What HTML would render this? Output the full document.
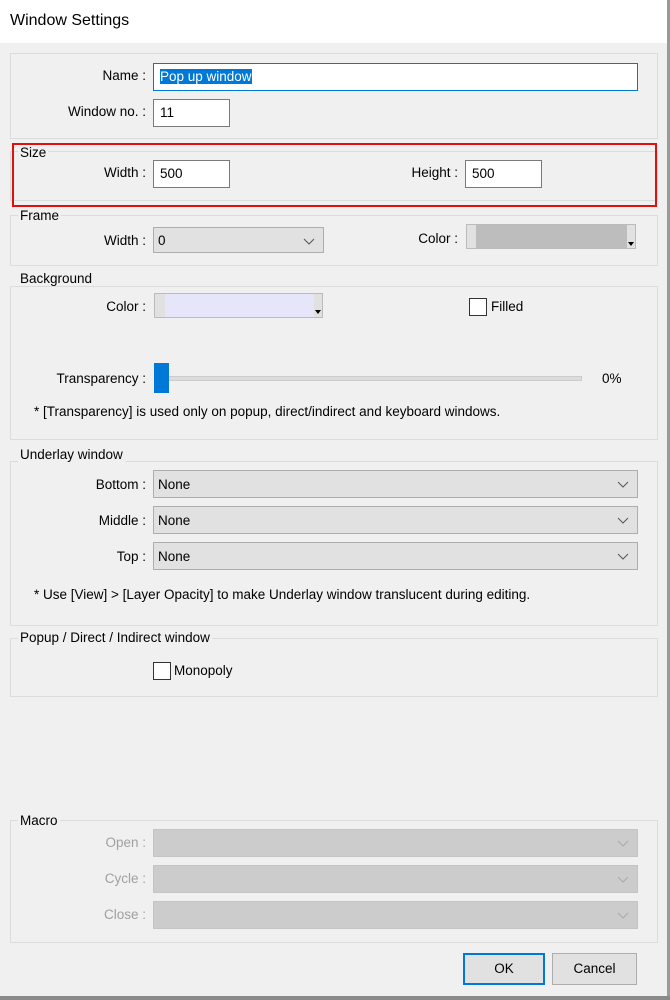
<!DOCTYPE html><html><head><style>
body{margin:0;width:670px;height:1000px;background:#f0f0f0;font-family:"Liberation Sans",sans-serif;font-size:13.5px;color:#000;position:relative;overflow:hidden}
.a{position:absolute}
.t{position:absolute;white-space:nowrap}
.r{text-align:right}
.g{position:absolute;border:1px solid #dcdcdc}
.gl{position:absolute;background:#f0f0f0;padding:0 2px;white-space:nowrap}
.in{position:absolute;background:#fff;border:1px solid #7a7a7a;box-sizing:border-box;padding:5px 6px}
.sel{position:absolute;background:#e1e1e1;border:1px solid #adadad;box-sizing:border-box;padding:6px 4px}
.sel svg{position:absolute;right:8px;top:10px}
.dis{background:#ccc;border-color:#c4c4c4}
.dl{color:#a0a0a0}
.cb{position:absolute;width:16px;height:16px;border:1px solid #333;background:#fff}
.btn{position:absolute;background:#e1e1e1;border:1px solid #adadad;box-sizing:border-box;text-align:center;line-height:29px}
</style></head><body>
<div class="a" style="left:0;top:0;width:667px;height:43px;background:#fff"></div>
<div class="t" style="left:10px;top:12px;font-size:16px">Window Settings</div>
<div class="a" style="left:667px;top:0;width:3px;height:1000px;background:#9a9a9a"></div>
<div class="a" style="left:0;top:996px;width:670px;height:4px;background:#8a8a8a"></div>

<div class="g" style="left:10px;top:53px;width:646px;height:84px"></div>
<div class="t r" style="right:524px;top:68px">Name :</div>
<div class="in" style="left:153px;top:63px;width:485px;height:28px;border-color:#0078d7"><span style="background:#0078d7;color:#fff">Pop up window</span></div>
<div class="t r" style="right:524px;top:104px">Window no. :</div>
<div class="in" style="left:153px;top:99px;width:77px;height:28px">11</div>

<div class="g" style="left:10px;top:151px;width:646px;height:48px"></div>
<div class="gl" style="left:18px;top:145px">Size</div>
<div class="t r" style="right:524px;top:165px">Width :</div>
<div class="in" style="left:153px;top:160px;width:77px;height:28px">500</div>
<div class="t r" style="right:212px;top:165px">Height :</div>
<div class="in" style="left:465px;top:160px;width:77px;height:28px">500</div>
<div class="a" style="left:12px;top:143px;width:641px;height:60px;border:2px solid #e01010"></div>

<div class="g" style="left:10px;top:215px;width:646px;height:49px"></div>
<div class="gl" style="left:18px;top:208px">Frame</div>
<div class="t r" style="right:524px;top:233px">Width :</div>
<div class="sel" style="left:153px;top:227px;width:171px;height:26px;padding:5px 4px">0<svg width="12" height="7"><path d="M1 1l5 5 5-5" fill="none" stroke="#555"/></svg></div>
<div class="t r" style="right:212px;top:231px">Color :</div>
<div class="a" style="left:466px;top:224px;width:170px;height:25px;border:1px solid #bbb;background:#bdbdbd;box-sizing:border-box"><div class="a" style="left:0;top:0;width:9px;height:23px;background:#e1e1e1"></div><div class="a" style="right:0;top:0;width:8px;height:23px;background:#e1e1e1"></div><div class="a" style="right:1px;top:17px;border:3px solid transparent;border-top:4px solid #000"></div></div>

<div class="g" style="left:10px;top:286px;width:646px;height:152px"></div>
<div class="gl" style="left:18px;top:271px">Background</div>
<div class="t r" style="right:524px;top:299px">Color :</div>
<div class="a" style="left:154px;top:293px;width:169px;height:25px;border:1px solid #bbb;background:#e6e6fa;box-sizing:border-box"><div class="a" style="left:0;top:0;width:10px;height:23px;background:#e1e1e1"></div><div class="a" style="right:0;top:0;width:8px;height:23px;background:#e1e1e1"></div><div class="a" style="right:1px;top:16px;border:3px solid transparent;border-top:4px solid #000"></div></div>
<div class="cb" style="left:469px;top:298px"></div>
<div class="t" style="left:491px;top:299px">Filled</div>
<div class="t r" style="right:524px;top:371px">Transparency :</div>
<div class="a" style="left:154px;top:376px;width:426px;height:3px;background:#dcdcdc;border:1px solid #ccc"></div>
<div class="a" style="left:154px;top:363px;width:15px;height:30px;background:#0078d7"></div>
<div class="t" style="left:602px;top:371px">0%</div>
<div class="t" style="left:34px;top:404px">* [Transparency] is used only on popup, direct/indirect and keyboard windows.</div>

<div class="g" style="left:10px;top:461px;width:646px;height:163px"></div>
<div class="gl" style="left:18px;top:447px">Underlay window</div>
<div class="t r" style="right:524px;top:477px">Bottom :</div>
<div class="sel" style="left:153px;top:470px;width:485px;height:28px">None<svg width="12" height="7"><path d="M1 1l5 5 5-5" fill="none" stroke="#555"/></svg></div>
<div class="t r" style="right:524px;top:513px">Middle :</div>
<div class="sel" style="left:153px;top:506px;width:485px;height:28px">None<svg width="12" height="7"><path d="M1 1l5 5 5-5" fill="none" stroke="#555"/></svg></div>
<div class="t r" style="right:524px;top:549px">Top :</div>
<div class="sel" style="left:153px;top:542px;width:485px;height:28px">None<svg width="12" height="7"><path d="M1 1l5 5 5-5" fill="none" stroke="#555"/></svg></div>
<div class="t" style="left:34px;top:587px">* Use [View] &gt; [Layer Opacity] to make Underlay window translucent during editing.</div>

<div class="g" style="left:10px;top:638px;width:646px;height:57px"></div>
<div class="gl" style="left:18px;top:630px">Popup / Direct / Indirect window</div>
<div class="cb" style="left:153px;top:662px"></div>
<div class="t" style="left:174px;top:663px">Monopoly</div>

<div class="g" style="left:10px;top:820px;width:646px;height:121px"></div>
<div class="gl" style="left:18px;top:813px">Macro</div>
<div class="t r dl" style="right:524px;top:835px">Open :</div>
<div class="sel dis" style="left:153px;top:829px;width:485px;height:28px"><svg width="12" height="7"><path d="M1 1l5 5 5-5" fill="none" stroke="#aaa"/></svg></div>
<div class="t r dl" style="right:524px;top:871px">Cycle :</div>
<div class="sel dis" style="left:153px;top:865px;width:485px;height:28px"><svg width="12" height="7"><path d="M1 1l5 5 5-5" fill="none" stroke="#aaa"/></svg></div>
<div class="t r dl" style="right:524px;top:907px">Close :</div>
<div class="sel dis" style="left:153px;top:901px;width:485px;height:28px"><svg width="12" height="7"><path d="M1 1l5 5 5-5" fill="none" stroke="#aaa"/></svg></div>

<div class="btn" style="left:463px;top:953px;width:82px;height:32px;border:2px solid #0078d7;line-height:28px">OK</div>
<div class="btn" style="left:552px;top:953px;width:85px;height:32px">Cancel</div>
</body></html>
